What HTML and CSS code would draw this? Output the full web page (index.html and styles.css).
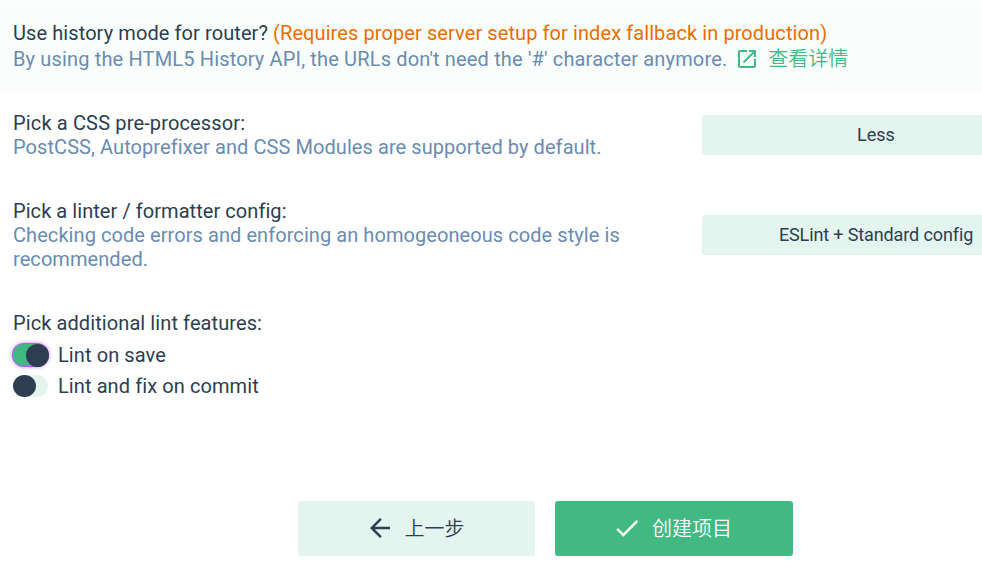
FILE: index.html
```html
<!DOCTYPE html>
<html lang="zh-CN">
<head>
<meta charset="utf-8">
<title>Project configuration</title>
<link rel="stylesheet" href="styles.css">
</head>
<body>
<main class="prompts">
  <section class="prompt history">
    <div class="message">Use history mode for router? <span class="warning">(Requires proper server setup for index fallback in production)</span></div>
    <div class="description"><span>By using the HTML5 History API, the URLs don't need the '#' character anymore.</span>
      <a class="link"><svg viewBox="0 0 24 24"><path d="M19 19H5V5h7V3H5a2 2 0 0 0-2 2v14a2 2 0 0 0 2 2h14c1.100 0 2-.9 2-2v-7h-2v7zM14 3v2h3.590l-9.830 9.830 1.410 1.410L19 6.410V10h2V3h-7z"/></svg><span>查看详情</span></a></div>
  </section>
  <section class="prompt row css">
    <div class="content"><div class="message">Pick a CSS pre-processor:</div><div class="description">PostCSS, Autoprefixer and CSS Modules are supported by default.</div></div>
    <div class="select"><span>Less</span></div>
  </section>
  <section class="prompt row linter">
    <div class="content"><div class="message">Pick a linter / formatter config:</div><div class="description">Checking code errors and enforcing an homogeoneous code style is recommended.</div></div>
    <div class="select"><span>ESLint + Standard config</span></div>
  </section>
  <section class="prompt features">
    <div class="message">Pick additional lint features:</div>
    <div class="option"><span class="switch on"><i></i></span><span>Lint on save</span></div>
    <div class="option"><span class="switch"><i></i></span><span>Lint and fix on commit</span></div>
  </section>
</main>
<footer class="actions">
  <button class="button"><svg viewBox="0 0 24 24"><path d="M20 11H7.830l5.590-5.590L12 4l-8 8 8 8 1.410-1.410L7.830 13H20v-2z"/></svg><span>上一步</span></button>
  <button class="button primary"><svg viewBox="0 0 24 24"><path d="M9 16.170L4.830 12l-1.420 1.410L9 19 21 7l-1.410-1.410z"/></svg><span>创建项目</span></button>
</footer>
</body>
</html>
```
FILE: styles.css
```css
* { box-sizing: border-box; }
body { margin: 0; width: 982px; height: 568px; overflow: hidden; background: #fff; color: #2c3e50; font: 20px/24px Roboto, "Noto Sans CJK SC", sans-serif; letter-spacing: 0.09px; }
.prompts { height: 501px; padding-top: 1px; }
.prompt { padding-left: 13px; }
.history { height: 90px; padding-top: 20px; background: #f9fefc; }
.message, .description { white-space: nowrap; }
.description { color: #6b8bb1; letter-spacing: 0.07px; }
.history .description { display: flex; align-items: center; height: 28px; letter-spacing: 0.155px; }
.warning { color: #ea6e00; }
.link { display: flex; align-items: center; color: #42b983; margin-left: 8px; font-weight: 350; letter-spacing: 0; }
.link svg { width: 24px; height: 24px; margin-right: 9px; }
svg { fill: currentColor; display: block; flex: none; }
.row { display: flex; }
.content { width: 689px; flex: none; }
.css { padding-top: 20px; height: 108px; }
.css .message { letter-spacing: 0.15px; }
.css .select { margin-top: 4px; }
.linter { height: 112px; }
.linter .message { letter-spacing: 0.06px; }
.linter .description { width: 650px; white-space: normal; }
.select { width: 280px; height: 40px; padding-left: 68px; flex: none; display: flex; align-items: center; justify-content: center; background: #e4f4ee; border-radius: 3px 0 0 3px; font-size: 18px; letter-spacing: -0.12px; }
.css .select { letter-spacing: 0; }
.linter .select { margin-top: 16px; }
.option { display: flex; align-items: center; height: 31px; gap: 10px; }
.message + .option { margin-top: 4px; }
.switch { width: 35px; height: 22px; border-radius: 12px; background: #e4f4ee; display: flex; }
.switch i { width: 23px; height: 22px; border-radius: 50%; background: #2c3e50; }
.on { background: #42b983; justify-content: flex-end; box-shadow: 0 0 0 1px #a65fe8, 0 0 4px 1px #c48cf0; }
.on i { height: 23px; margin-right: -1px; }
.actions { display: flex; gap: 20px; padding-left: 298px; }
.button { width: 237px; height: 55px; padding: 0 4px 0 0; border: 0; border-radius: 3px; background: #e4f4ee; color: #2c3e50; display: flex; align-items: center; justify-content: center; gap: 10px; font: inherit; font-weight: 350; letter-spacing: 0; }
.button svg { width: 30px; height: 30px; margin-bottom: 2px; }
.primary { width: 238px; background: #42b983; color: #fff; }
```
